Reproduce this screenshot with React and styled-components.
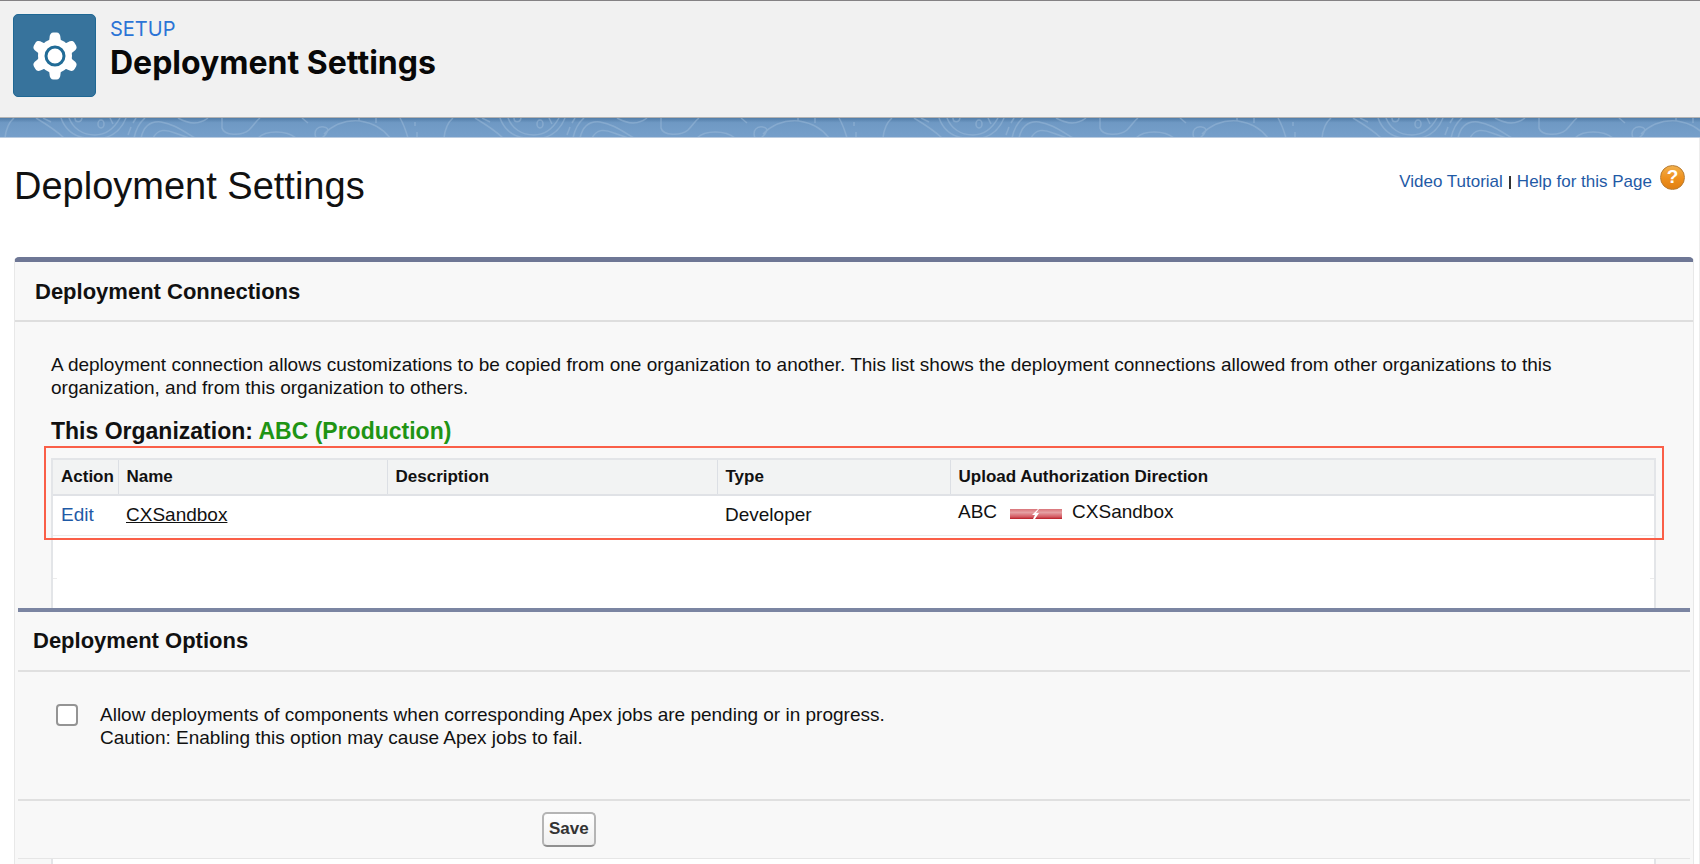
import React from 'react'
import styled, { createGlobalStyle } from 'styled-components'

const connections = [
  {
    id: 1,
    name: 'CXSandbox',
    description: '',
    type: 'Developer',
    from: 'ABC',
    to: 'CXSandbox',
  },
]

const teeth = [0, 60, 120, 180, 240, 300]

const GearIcon = () => (
  <GearSvg viewBox="0 0 48 48" aria-hidden="true">
    <circle cx="24" cy="24" r="17" fill="#fff" />
    {teeth.map((angle) => (
      <path
        key={angle}
        d="M14 12c3-1 4.500-3 4.500-6 0-3.500 1.500-5.500 4-5.500h3c2.500 0 4 2 4 5.500 0 3 1.500 5 4.500 6z"
        fill="#fff"
        transform={`rotate(${angle} 24 24)`}
      />
    ))}
    <circle cx="24" cy="24" r="9" fill="#fff" stroke="#216c97" strokeWidth="3" />
  </GearSvg>
)

const TopoLines = () => (
  <TopoSvg aria-hidden="true">
    <defs>
      <pattern id="topo" width="439" height="20" patternUnits="userSpaceOnUse">
        <g fill="none" stroke="#a3bfdd" strokeOpacity=".45" strokeWidth="1.500">
          <path d="M5 20C6 11 8 5 14 0M36 0c10 6 20 12 28 20M43 0l8 4M61 0c4 11 12 18 24 20M69 0c4 10 13 17 26 17s20-8 25-17M104 20c12-3 18-10 22-20" />
          <path d="M75 0c0 5 6 5 7 0M110 0l3 6M136 0l-3 5M131 9l-3 8M134 20c2-9 5-15 11-20M141 20c3-13 10-17 20-16 13 2 22 9 34 16M153 20c5-9 12-9 22-5l14 5" />
          <ellipse cx="101" cy="6" rx="3" ry="4" />
          <path d="M178 0c9 5 20 8 30 0M222 0v10c2 8 20 8 27 2 5-5 7-9 11-12M258 20c8-8 28-8 38 0M302 0l6 5M316 20c-3-8 2-12 8-11 7 1 3 7-2 11M324 16c12-12 24-14 36-13 14 2 24 9 30 17M359 0v3M376 0v5M400 0c4 7 6 13 8 20M415 4v4M417 14v5" />
        </g>
      </pattern>
    </defs>
    <rect width="100%" height="100%" fill="url(#topo)" />
  </TopoSvg>
)

const BrokenLink = () => (
  <LinkSvg viewBox="0 0 52 10" role="img" aria-label="Not connected">
    <defs>
      <linearGradient id="link" x1="0" y1="0" x2="0" y2="1">
        <stop offset="0" stopColor="#d9757a" />
        <stop offset=".35" stopColor="#e5a0a3" />
        <stop offset=".8" stopColor="#d3575f" />
        <stop offset="1" stopColor="#b81c25" />
      </linearGradient>
    </defs>
    <rect width="52" height="10" fill="url(#link)" />
    <path d="M28 0l-6 6h3l-2 4h2l4-6h-3l3-4z" fill="#fff" />
  </LinkSvg>
)

const App = () => (
  <Page>
    <GlobalStyle />
    <Header>
      <IconTile>
        <GearIcon />
      </IconTile>
      <div>
        <Eyebrow>SETUP</Eyebrow>
        <HeaderTitle>Deployment Settings</HeaderTitle>
      </div>
    </Header>
    <Band>
      <TopoLines />
    </Band>
    <Content>
      <TitleRow>
        <PageTitle>Deployment Settings</PageTitle>
        <HelpLinks>
          <Link href="#video">Video Tutorial</Link>
          <Divider />
          <Link href="#help">Help for this Page</Link>
          <HelpBadge href="#help" aria-label="Help">?</HelpBadge>
        </HelpLinks>
      </TitleRow>
      <Panel>
        <SectionTitle>Deployment Connections</SectionTitle>
        <Connections>
          <Text>
            A deployment connection allows customizations to be copied from one organization to another. This list shows the deployment connections allowed from other organizations to this organization, and from this organization to others.
          </Text>
          <Organization>
            This Organization: <OrgName>ABC (Production)</OrgName>
          </Organization>
          <List>
            <Highlight>
              <Table>
                <colgroup>
                  <Col $width="65px" />
                  <Col $width="269px" />
                  <Col $width="330px" />
                  <Col $width="233px" />
                  <col />
                </colgroup>
                <thead>
                  <tr>
                    <Th>Action</Th>
                    <Th>Name</Th>
                    <Th>Description</Th>
                    <Th>Type</Th>
                    <Th>Upload Authorization Direction</Th>
                  </tr>
                </thead>
                <tbody>
                  {connections.map((item) => (
                    <tr key={item.id}>
                      <Td><Link href="#edit">Edit</Link></Td>
                      <Td><NameLink href="#connection">{item.name}</NameLink></Td>
                      <Td>{item.description}</Td>
                      <Td>{item.type}</Td>
                      <Td>
                        <Direction>
                          {item.from}
                          <BrokenLink />
                          {item.to}
                        </Direction>
                      </Td>
                    </tr>
                  ))}
                </tbody>
              </Table>
            </Highlight>
            <EmptyRows />
          </List>
        </Connections>
        <Options>
          <OptionsTitle>Deployment Options</OptionsTitle>
          <OptionRow>
            <Checkbox type="checkbox" id="allow" />
            <label htmlFor="allow">
              Allow deployments of components when corresponding Apex jobs are pending or in progress.
              <br />
              Caution: Enabling this option may cause Apex jobs to fail.
            </label>
          </OptionRow>
          <Actions>
            <SaveButton type="button">Save</SaveButton>
          </Actions>
        </Options>
        <ListEnd />
      </Panel>
    </Content>
  </Page>
)

export default App

const GlobalStyle = createGlobalStyle`
* {
  box-sizing: border-box;
}
body {
  margin: 0;
  background: #fff;
  color: #111;
  font-family: "Liberation Sans", Arial, sans-serif;
  font-size: 19px;
}
`

const Page = styled.div`
display: flex;
flex-direction: column;
min-height: 100vh;
`

const Header = styled.header`
display: flex;
gap: 14px;
height: 118px;
padding: 13px;
border-top: 1px solid #848284;
border-bottom: 1px solid #b4b4b4;
background: #f1f1f1;
font-family: Inter, sans-serif;
`

const IconTile = styled.div`
display: flex;
align-items: center;
justify-content: center;
width: 83px;
height: 83px;
border: 1px solid #1f6894;
border-radius: 5px;
background: #37739c;
`

const GearSvg = styled.svg`
width: 48px;
height: 48px;
`

const Eyebrow = styled.div`
color: #2b74d6;
font-size: 20px;
line-height: 30px;
`

const HeaderTitle = styled.h1`
margin: 0;
color: #080808;
font-size: 32px;
line-height: 38px;
`

const Band = styled.div`
height: 20px;
border-bottom: 1px solid #b9cbe0;
background: linear-gradient(#527da8, #6f99c4 25%, #769fca);
`

const TopoSvg = styled.svg`
display: block;
width: 100%;
height: 100%;
`

const Content = styled.main`
display: flex;
flex: 1;
flex-direction: column;
padding: 20px 5px 0 14px;
border-right: 1px solid #ededed;
`

const TitleRow = styled.div`
display: flex;
justify-content: space-between;
height: 99px;
padding-right: 9px;
`

const PageTitle = styled.h2`
margin: 0;
font-size: 38px;
font-weight: normal;
line-height: 56px;
`

const HelpLinks = styled.div`
display: flex;
align-items: center;
height: 48px;
font-size: 17px;
`

const Link = styled.a`
color: #1f5aa6;
text-decoration: none;
`

const NameLink = styled.a`
color: #111;
`

const Divider = styled.span`
width: 2px;
height: 13px;
margin: 0 6px;
background: #333;
`

const HelpBadge = styled.a`
display: flex;
align-items: center;
justify-content: center;
width: 25px;
height: 25px;
margin: 0 0 10px 8px;
border: 1px solid #b87b31;
border-radius: 50%;
background: linear-gradient(#f2b04b, #ee8f1c 55%, #e07f10);
color: #fff;
font-size: 19px;
font-weight: bold;
text-decoration: none;
`

const Panel = styled.section`
display: flex;
flex: 1;
flex-direction: column;
border: 1px solid #e8e8e8;
border-top: 5px solid #6e7795;
border-bottom: 0;
border-radius: 5px 5px 0 0;
background: #f8f8f8;
`

const SectionTitle = styled.h3`
height: 60px;
margin: 0;
padding-left: 20px;
border-bottom: 2px solid #dedede;
font-size: 22px;
line-height: 60px;
`

const Connections = styled.div`
padding: 31px 37px 0 36px;
`

const Text = styled.p`
margin: 0;
line-height: 23px;
`

const Organization = styled.h4`
margin: 18px 0 13px;
font-size: 23px;
line-height: 28px;
`

const OrgName = styled.span`
color: #1f9414;
`

const List = styled.div`
border: 2px solid #e3e5e8;
border-bottom: 0;
background: #fff;
`

const Highlight = styled.div`
position: relative;

&::after {
  position: absolute;
  inset: -14px -10px -4px -9px;
  border: 2px solid #fa5f48;
  content: '';
  pointer-events: none;
}
`

const Table = styled.table`
width: 100%;
border-collapse: collapse;
table-layout: fixed;
`

const Col = styled.col`
width: ${(props) => props.$width};
`

const Th = styled.th`
height: 35px;
padding: 0 8px;
border-right: 1px solid #dcdfe4;
border-bottom: 2px solid #e0e2e6;
background: #f2f3f3;
font-size: 17px;
text-align: left;

&:last-child {
  border-right: 0;
}
`

const Td = styled.td`
height: 40px;
padding: 0 8px;
border-bottom: 1px solid #ececec;
`

const Direction = styled.div`
display: flex;
align-items: center;
padding-bottom: 6px;
`

const LinkSvg = styled.svg`
width: 52px;
height: 10px;
margin: 4px 10px 0 13px;
`

/* short rule stubs at both edges mark the empty rows */
const EmptyRows = styled.div`
height: 72px;
background:
  linear-gradient(#ececec, #ececec) 0 42px / 4px 1px no-repeat,
  linear-gradient(#ececec, #ececec) 100% 42px / 4px 1px no-repeat;
`

const Options = styled.section`
margin: 0 3px;
border-top: 4px solid #7b85a2;
border-bottom: 1px solid #e6e6e6;
`

const OptionsTitle = styled.h3`
height: 60px;
margin: 0;
padding-left: 15px;
border-bottom: 2px solid #e0e0e0;
font-size: 22px;
line-height: 58px;
`

const OptionRow = styled.div`
display: flex;
gap: 22px;
height: 129px;
padding: 31px 38px 0;
border-bottom: 2px solid #e0e0e0;
line-height: 23px;
`

const Checkbox = styled.input`
width: 22px;
height: 22px;
margin: 1px 0;
border: 2px solid #949494;
border-radius: 4px;
background: #fff;
appearance: none;

&:checked {
  background: #1f5aa6;
}
`

const Actions = styled.div`
height: 57px;
padding: 11px 0 0 524px;
`

const SaveButton = styled.button`
height: 35px;
padding: 0 5px;
border: 2px solid #b5b5b5;
border-bottom-color: #8f8f8f;
border-radius: 5px;
background: linear-gradient(#fff, #f0f0f0);
color: #333;
font-family: inherit;
font-size: 17px;
font-weight: bold;
`

const ListEnd = styled.div`
flex: 1;
min-height: 6px;
margin: 0 37px 0 36px;
border: 2px solid #e3e5e8;
border-top: 0;
border-bottom: 0;
background: #fff;
`
